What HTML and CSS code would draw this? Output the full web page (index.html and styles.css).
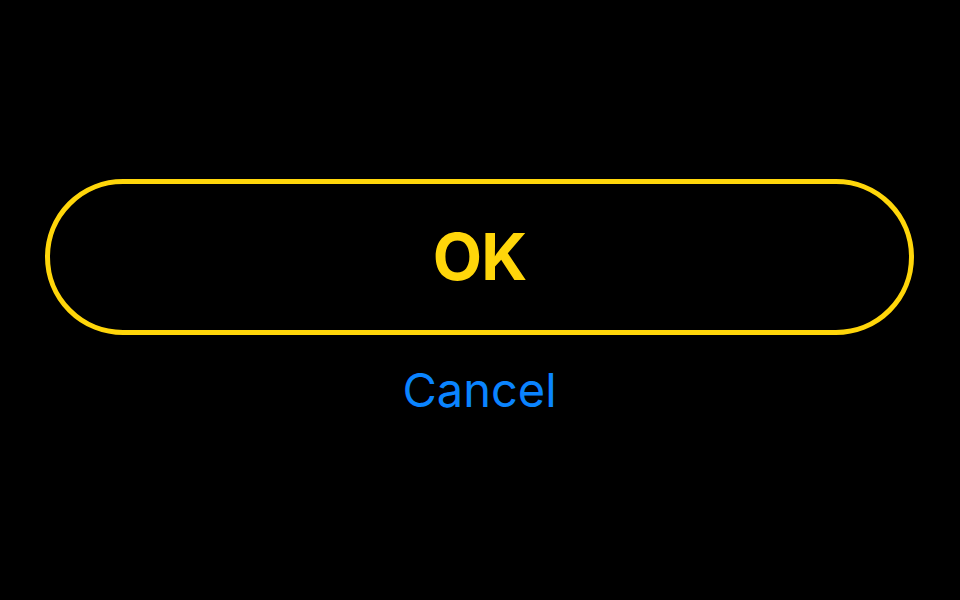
FILE: index.html
```html
<!DOCTYPE html>
<html>
<head>
<meta charset="utf-8">
<link rel="stylesheet" href="styles.css">
</head>
<body>
<div class="wrap">
  <button class="ok">OK</button>
  <div class="cancel">Cancel</div>
</div>
</body>
</html>
```
FILE: styles.css
```css
html, body {
  margin: 0;
  padding: 0;
  background: #000;
  width: 960px;
  height: 600px;
  overflow: hidden;
}
.wrap {
  display: flex;
  flex-direction: column;
  align-items: center;
  padding: 179px 46px 0 45px;
}
.ok {
  box-sizing: border-box;
  width: 869px;
  height: 156px;
  border: 5px solid #FFD60A;
  border-radius: 78px;
  background: #000;
  color: #FFD60A;
  font-family: Inter, "Noto Sans", sans-serif;
  font-weight: 700;
  font-size: 64px;
  letter-spacing: -1px;
  display: flex;
  align-items: center;
  justify-content: center;
  padding: 0 0 2px 0;
}
.cancel {
  margin-top: 31px;
  color: #0A84FF;
  font-family: Inter, "Noto Sans", sans-serif;
  font-size: 47px;
  line-height: 47px;
}
```
